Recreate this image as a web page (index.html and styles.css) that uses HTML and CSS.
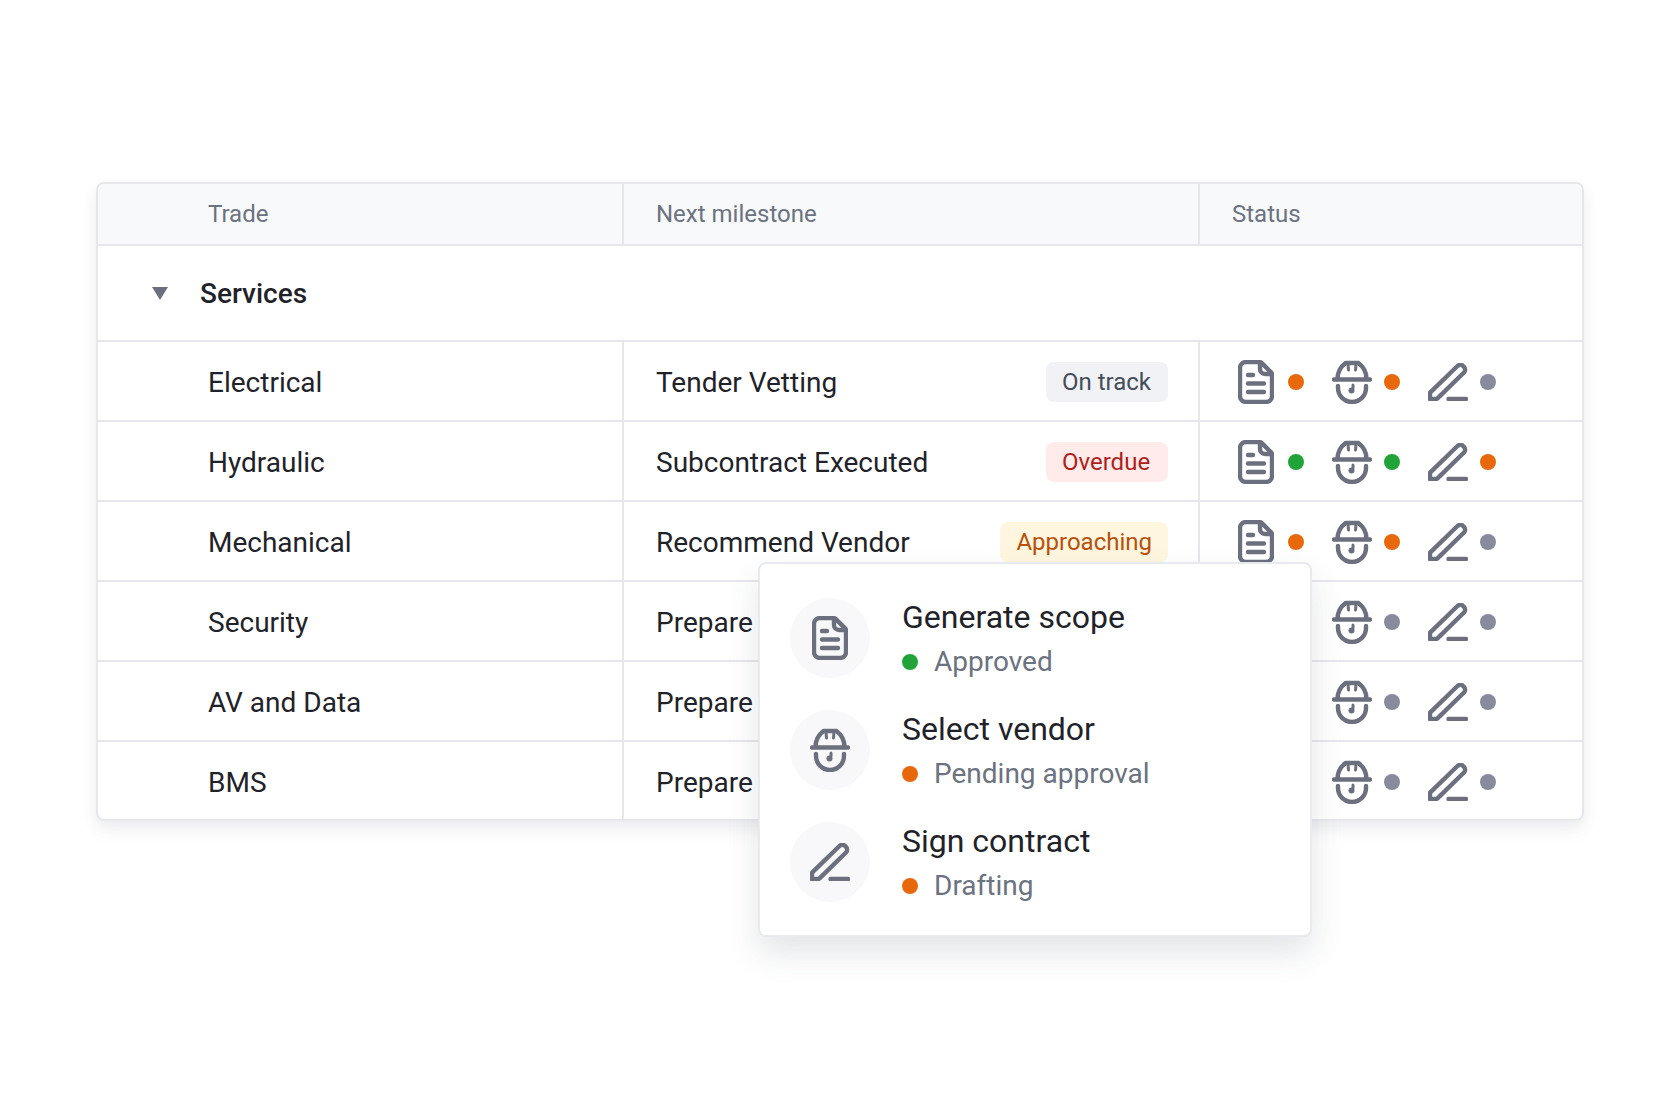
FILE: index.html
```html
<!DOCTYPE html>
<html lang="en">
<head>
<meta charset="utf-8">
<title>Trade milestones</title>
<link rel="stylesheet" href="styles.css">
</head>
<body>
<svg class="defs" width="0" height="0" aria-hidden="true">
  <symbol id="doc" viewBox="0 0 36 44">
    <path d="M8 2h13.500a3 3 0 0 1 2.100.9l9.500 9.500a3 3 0 0 1 .9 2.100V36a6 6 0 0 1-6 6H8a6 6 0 0 1-6-6V8a6 6 0 0 1 6-6z"/>
    <path d="M22 3v6a5 5 0 0 0 5 5h6"/>
    <path d="M10 15h5M10 23.500h16M10 32h16"/>
  </symbol>
  <symbol id="hat" viewBox="0 0 40 44">
    <path d="M2 19.500h36"/>
    <path d="M5.500 19C5.500 12 9 6.500 13.500 3h13C31 6.500 34.500 12 34.500 19"/>
    <path class="thin" d="M16 4l.5 6M24 4l-.5 6"/>
    <path d="M6 26v2a14 14 0 0 0 28 0v-2"/>
    <path class="thin" d="M21 25v3"/>
    <circle class="nose" cx="19.500" cy="30.500" r="3"/>
  </symbol>
  <symbol id="pen" viewBox="0 0 40 38">
    <path d="M2 36v-5.500a2 2 0 0 1 .6-1.400L29.500 3a4 4 0 0 1 5.600 0l.9.9a4 4 0 0 1 0 5.600L9.500 35.400a2 2 0 0 1-1.400.6z"/>
    <path d="M20.500 36h17.500"/>
  </symbol>
</svg>
<main class="stage">
  <section class="table">
    <div class="row head">
      <div class="cell first">Trade</div>
      <div class="cell">Next milestone</div>
      <div class="cell last">Status</div>
    </div>
    <div class="group"><span class="caret"></span><span>Services</span></div>

    <div class="row body">
      <div class="cell first">Electrical</div>
      <div class="cell mile"><span class="label">Tender Vetting</span><span class="badge neutral">On track</span></div>
      <div class="cell last status">
        <span class="st"><svg class="i doc"><use href="#doc"/></svg><i class="dot orange"></i></span>
        <span class="st"><svg class="i hat"><use href="#hat"/></svg><i class="dot orange"></i></span>
        <span class="st"><svg class="i pen"><use href="#pen"/></svg><i class="dot grey"></i></span>
      </div>
    </div>
    <div class="row body">
      <div class="cell first">Hydraulic</div>
      <div class="cell mile"><span class="label">Subcontract Executed</span><span class="badge red">Overdue</span></div>
      <div class="cell last status">
        <span class="st"><svg class="i doc"><use href="#doc"/></svg><i class="dot green"></i></span>
        <span class="st"><svg class="i hat"><use href="#hat"/></svg><i class="dot green"></i></span>
        <span class="st"><svg class="i pen"><use href="#pen"/></svg><i class="dot orange"></i></span>
      </div>
    </div>
    <div class="row body">
      <div class="cell first">Mechanical</div>
      <div class="cell mile"><span class="label">Recommend Vendor</span><span class="badge amber">Approaching</span></div>
      <div class="cell last status">
        <span class="st"><svg class="i doc"><use href="#doc"/></svg><i class="dot orange"></i></span>
        <span class="st"><svg class="i hat"><use href="#hat"/></svg><i class="dot orange"></i></span>
        <span class="st"><svg class="i pen"><use href="#pen"/></svg><i class="dot grey"></i></span>
      </div>
    </div>
    <div class="row body">
      <div class="cell first">Security</div>
      <div class="cell mile"><span class="label">Prepare</span></div>
      <div class="cell last status">
        <span class="st"><svg class="i doc"><use href="#doc"/></svg><i class="dot grey"></i></span>
        <span class="st"><svg class="i hat"><use href="#hat"/></svg><i class="dot grey"></i></span>
        <span class="st"><svg class="i pen"><use href="#pen"/></svg><i class="dot grey"></i></span>
      </div>
    </div>
    <div class="row body">
      <div class="cell first">AV and Data</div>
      <div class="cell mile"><span class="label">Prepare</span></div>
      <div class="cell last status">
        <span class="st"><svg class="i doc"><use href="#doc"/></svg><i class="dot grey"></i></span>
        <span class="st"><svg class="i hat"><use href="#hat"/></svg><i class="dot grey"></i></span>
        <span class="st"><svg class="i pen"><use href="#pen"/></svg><i class="dot grey"></i></span>
      </div>
    </div>
    <div class="row body">
      <div class="cell first">BMS</div>
      <div class="cell mile"><span class="label">Prepare</span></div>
      <div class="cell last status">
        <span class="st"><svg class="i doc"><use href="#doc"/></svg><i class="dot grey"></i></span>
        <span class="st"><svg class="i hat"><use href="#hat"/></svg><i class="dot grey"></i></span>
        <span class="st"><svg class="i pen"><use href="#pen"/></svg><i class="dot grey"></i></span>
      </div>
    </div>
  </section>

  <aside class="popup">
    <div class="item">
      <span class="disc"><svg class="i doc"><use href="#doc"/></svg></span>
      <div class="txt">
        <div class="title">Generate scope</div>
        <div class="sub"><i class="dot green"></i>Approved</div>
      </div>
    </div>
    <div class="item">
      <span class="disc"><svg class="i hat"><use href="#hat"/></svg></span>
      <div class="txt">
        <div class="title">Select vendor</div>
        <div class="sub"><i class="dot orange"></i>Pending approval</div>
      </div>
    </div>
    <div class="item">
      <span class="disc"><svg class="i pen"><use href="#pen"/></svg></span>
      <div class="txt">
        <div class="title">Sign contract</div>
        <div class="sub"><i class="dot orange"></i>Drafting</div>
      </div>
    </div>
  </aside>
</main>
</body>
</html>
```

FILE: styles.css
```css
* { box-sizing: border-box; }
html, body { margin: 0; background: #fff; }
body {
  width: 1680px;
  height: 1120px;
  overflow: hidden;
  font-family: Roboto, "Noto Sans", sans-serif;
  color: #1f2329;
}
.defs { position: absolute; }
.stage {
  position: relative;
  width: 1488px;
  margin: 182px 0 0 96px;
}
.table {
  width: 1488px;
  height: 639px;
  background: #fff;
  border: 2px solid #e6e8ec;
  border-radius: 8px;
  overflow: hidden;
  box-shadow: 0 8px 16px rgba(60, 70, 90, .10);
}
.row {
  display: grid;
  grid-template-columns: 524px 576px 1fr;
  height: 80px;
  border-top: 2px solid #e6e7ea;
  font-size: 28px;
}
.row.head {
  height: 60px;
  border-top: 0;
  background: #f8f9fb;
  font-size: 24px;
  color: #6b7280;
}
.row.body .cell { padding-top: 1px; }
.row.body .cell.first { padding-top: 3px; }
.label { padding-top: 2px; }
.group {
  display: flex;
  align-items: center;
  height: 96px;
  border-top: 2px solid #e6e7ea;
  padding-left: 54px;
  font-size: 28px;
  font-weight: 500;
}
.caret {
  width: 0;
  height: 0;
  margin-right: 32px;
  border-left: 8.500px solid transparent;
  border-right: 8.500px solid transparent;
  border-top: 13px solid #6b7080;
}
.cell {
  display: flex;
  align-items: center;
  padding-left: 32px;
  border-left: 2px solid #e6e7ea;
}
.cell.first { padding-left: 110px; border-left: 0; }
.mile { justify-content: space-between; padding-right: 30px; }
.badge {
  display: flex;
  align-items: center;
  min-width: 122px;
  height: 40px;
  padding: 0 16px;
  border-radius: 8px;
  font-size: 24px;
}
.neutral { background: #f0f2f5; color: #464c58; }
.red { background: #ffecea; color: #b01d1d; }
.amber { background: #fff6df; color: #b8500c; }
.status { padding-left: 36px; }
.st { display: flex; align-items: center; width: 96px; }
.st .i { margin-right: 12px; }
.st .doc { margin-left: 2px; margin-right: 14px; }
.i {
  flex: none;
  fill: none;
  stroke: #6c6f7e;
  stroke-width: 4.400;
  stroke-linecap: round;
  stroke-linejoin: round;
}
.i.doc { width: 36px; height: 44px; }
.i.hat { width: 40px; height: 44px; }
.i.pen { width: 40px; height: 38px; }
.thin { stroke-width: 3; }
.nose { fill: #6c6f7e; stroke: none; }
.dot {
  display: block;
  flex: none;
  width: 16px;
  height: 16px;
  border-radius: 50%;
}
.orange { background: #e8680c; }
.green { background: #22a33a; }
.grey { background: #888b9b; }
.popup {
  position: absolute;
  left: 662px;
  top: 380px;
  width: 554px;
  height: 375px;
  display: flex;
  flex-direction: column;
  gap: 32px;
  padding: 34px 30px 0;
  background: #fff;
  border: 2px solid #e8eaed;
  border-radius: 8px;
  box-shadow: 0 16px 32px rgba(60, 70, 90, .14);
}
.item { display: flex; align-items: center; height: 80px; }
.disc {
  display: flex;
  flex: none;
  align-items: center;
  justify-content: center;
  width: 80px;
  height: 80px;
  margin-right: 32px;
  border-radius: 50%;
  background: #f8f8fa;
}
.txt { padding-top: 2px; }
.title { font-size: 32px; line-height: 40px; color: #1f2329; }
.sub {
  display: flex;
  align-items: center;
  gap: 16px;
  margin-top: 6px;
  font-size: 28px;
  line-height: 38px;
  color: #6b7280;
}
```
